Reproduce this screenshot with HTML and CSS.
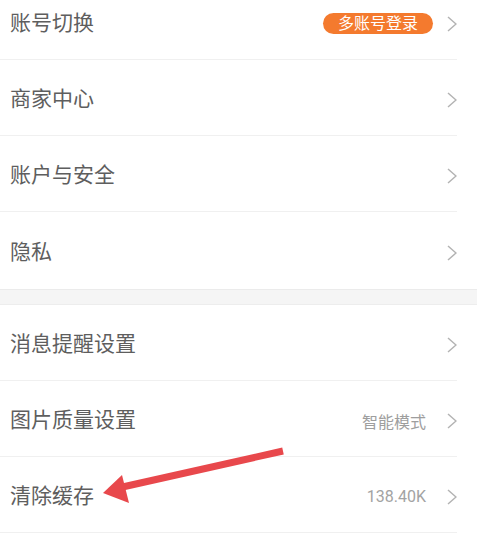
FILE: index.html
```html
<!DOCTYPE html>
<html lang="zh">
<head>
<meta charset="utf-8">
<link rel="stylesheet" href="styles.css">
</head>
<body>
<div class="page">
  <div class="group first">
    <div class="row"><span class="label">账号切换</span><span class="badge">多账号登录</span><svg class="chev" viewBox="0 0 10 16"><polyline points="1,1 9,8 1,15"/></svg></div>
    <div class="row"><span class="label">商家中心</span><svg class="chev" viewBox="0 0 10 16"><polyline points="1,1 9,8 1,15"/></svg></div>
    <div class="row"><span class="label">账户与安全</span><svg class="chev" viewBox="0 0 10 16"><polyline points="1,1 9,8 1,15"/></svg></div>
    <div class="row last"><span class="label">隐私</span><svg class="chev" viewBox="0 0 10 16"><polyline points="1,1 9,8 1,15"/></svg></div>
  </div>
  <div class="band"></div>
  <div class="group">
    <div class="row"><span class="label">消息提醒设置</span><svg class="chev" viewBox="0 0 10 16"><polyline points="1,1 9,8 1,15"/></svg></div>
    <div class="row"><span class="label">图片质量设置</span><span class="value">智能模式</span><svg class="chev" viewBox="0 0 10 16"><polyline points="1,1 9,8 1,15"/></svg></div>
    <div class="row"><span class="label">清除缓存</span><span class="value num">138.40K</span><svg class="chev" viewBox="0 0 10 16"><polyline points="1,1 9,8 1,15"/></svg></div>
  </div>
  <svg class="arrow" viewBox="0 0 477 544" width="477" height="544">
    <line x1="283" y1="451" x2="118" y2="488" />
    <polygon points="103,493 122,475 129,503" />
  </svg>
</div>
</body>
</html>
```
FILE: styles.css
```css
html, body {
  margin: 0;
  padding: 0;
  background: #ffffff;
  overflow: hidden;
}
.page {
  position: relative;
  width: 477px;
  height: 544px;
  overflow: hidden;
  font-family: Roboto, "Noto Sans CJK SC", sans-serif;
}
.group.first {
  margin-top: -16px;
}
.row {
  display: flex;
  align-items: center;
  height: 71px;
  padding-top: 4px;
  margin-right: 20px;
  padding-left: 10px;
  border-bottom: 1px solid #f0f0f0;
}
.row.last {
  border-bottom: none;
  height: 73px;
}
.label {
  flex: 1;
  font-size: 21px;
  color: #5e5e5e;
  line-height: 1;
}
.value {
  font-size: 16px;
  color: #9e9e9e;
  margin-right: 7px;
}
.value.num {
  font-size: 16px;
  color: #a3a3a3;
}
.badge {
  display: inline-block;
  height: 21px;
  line-height: 21px;
  padding: 0 15px;
  border-radius: 11px;
  background: #f47a2e;
  color: #ffffff;
  font-size: 16px;
}
.chev {
  width: 10px;
  height: 16px;
  margin-left: 14px;
  fill: none;
  stroke: #b3b3b3;
  stroke-width: 1.5;
}
.band {
  height: 14px;
  background: #f5f5f5;
  border-top: 1px solid #ebebeb;
  border-bottom: 1px solid #ededed;
}
.arrow {
  position: absolute;
  left: 0;
  top: 0;
}
.arrow line {
  stroke: #e8484c;
  stroke-width: 7;
}
.arrow polygon {
  fill: #e8484c;
}
```
